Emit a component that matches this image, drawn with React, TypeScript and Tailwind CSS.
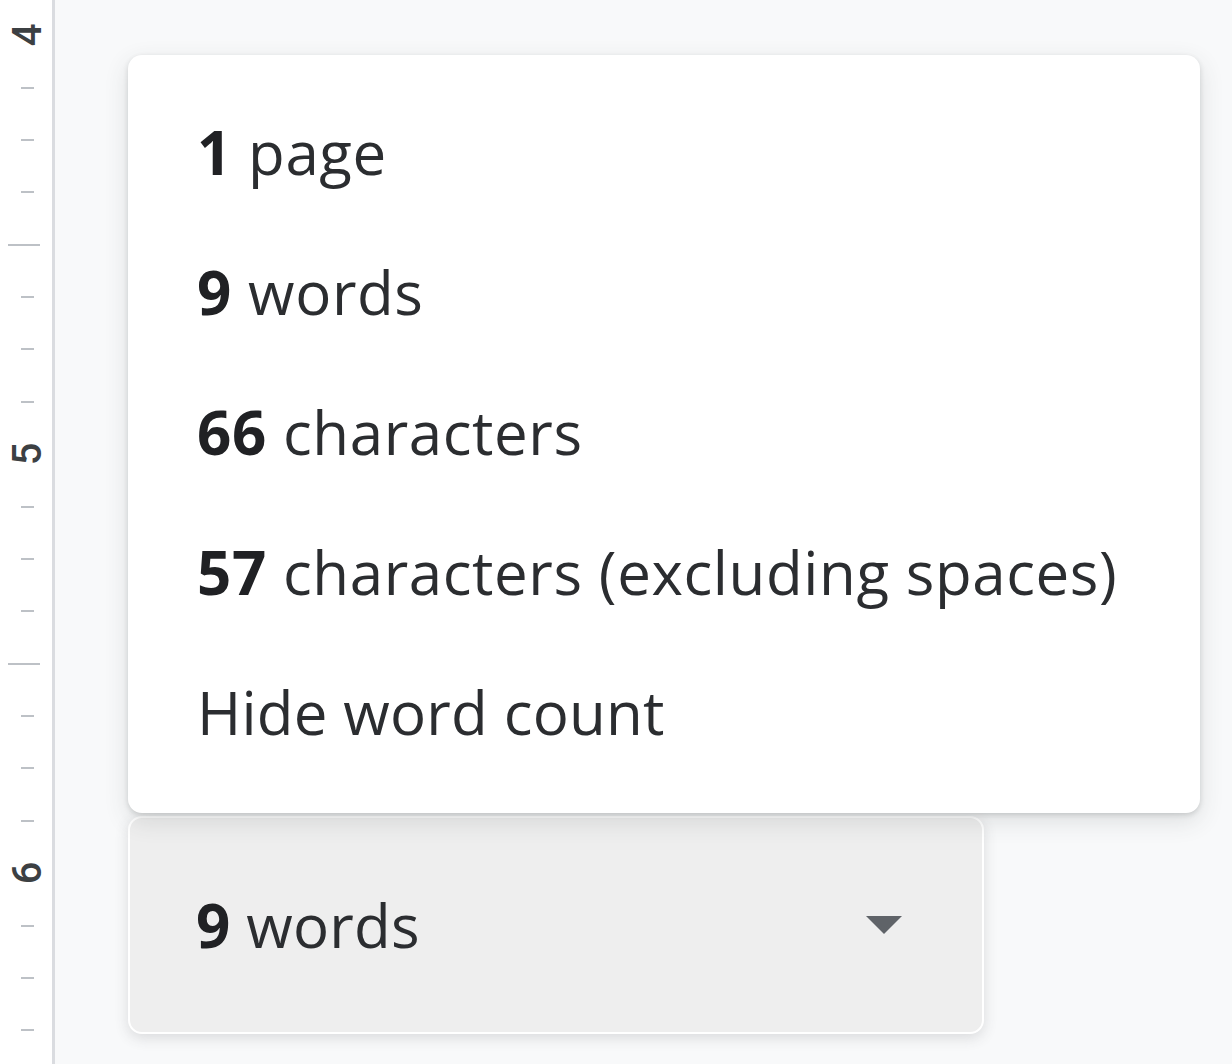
import React from "react"

type Mark = { kind: "label"; text: string } | { kind: "tick" } | { kind: "long" }

const marks: Mark[] = []
const labels = ["4", "5", "6"]
labels.forEach((l, i) => {
	marks.push({ kind: "label", text: l })
	if (i < labels.length - 1) {
		marks.push({ kind: "tick" }, { kind: "tick" }, { kind: "tick" }, { kind: "long" })
		marks.push({ kind: "tick" }, { kind: "tick" }, { kind: "tick" })
	}
})
marks.push({ kind: "tick" }, { kind: "tick" }, { kind: "tick" }, { kind: "long" })

const stats = [
	{ n: "1", label: "page" },
	{ n: "9", label: "words" },
	{ n: "66", label: "characters" },
	{ n: "57", label: "characters (excluding spaces)" },
]

function Ruler() {
	return (
		<div className="w-[55px] shrink-0 bg-white border-r-[3px] border-[#dadce0] flex flex-col pt-[9px]">
			{marks.map((m, i) => (
				<div key={i} className="h-[52.375px] shrink-0 flex items-center">
					{m.kind === "label" && (
						<div className="w-full pl-[4px] flex justify-center">
							<span
								className="block text-[40px] leading-[40px] font-medium text-[#3c4043] -rotate-90"
								style={{ fontFamily: "Roboto, sans-serif" }}
							>
								{m.text}
							</span>
						</div>
					)}
					{m.kind === "tick" && <span className="ml-[21px] w-[13px] h-[2px] bg-[#bdc1c6]" />}
					{m.kind === "long" && <span className="ml-[8px] w-[32px] h-[2px] bg-[#bdc1c6]" />}
				</div>
			))}
		</div>
	)
}

export default function App() {
	return (
		<div
			className="w-[1232px] h-[1064px] flex overflow-hidden bg-[#f8f9fa]"
			style={{ fontFamily: '"Open Sans", "Noto Sans", sans-serif' }}
		>
			<Ruler />
			<div className="flex-1 flex flex-col items-start pl-[73px] pt-[55px]">
				<div className="relative z-10 w-[1072px] bg-white rounded-[14px] pt-[27px] pb-[31px] pl-[69px] shadow-[0_2px_5px_rgba(60,64,67,0.18),0_8px_24px_rgba(60,64,67,0.14)]">
					{stats.map(s => (
						<div key={s.label} className="h-[140px] leading-[140px] text-[60px] tracking-[0.6px] text-[#2b2d30] whitespace-nowrap">
							<span className="font-bold text-[#202124]">{s.n}</span> {s.label}
						</div>
					))}
					<div className="h-[140px] leading-[140px] text-[60px] tracking-[0.2px] text-[#2b2d30] whitespace-nowrap">
						Hide word count
					</div>
				</div>
				<div className="mt-[3px] w-[856px] h-[218px] bg-[#eeeeee] border-2 border-white rounded-[14px] flex items-center justify-between pl-[66px] pr-[80px] shadow-[0_4px_14px_rgba(60,64,67,0.16)]">
					<div className="text-[60px] leading-none tracking-[0.2px] text-[#2b2d30] whitespace-nowrap">
						<span className="font-bold text-[#202124]">9</span> words
					</div>
					<svg width="36" height="18" viewBox="0 0 36 18">
						<polygon points="0,0 36,0 18,18" fill="#5f6368" />
					</svg>
				</div>
			</div>
		</div>
	)
}
